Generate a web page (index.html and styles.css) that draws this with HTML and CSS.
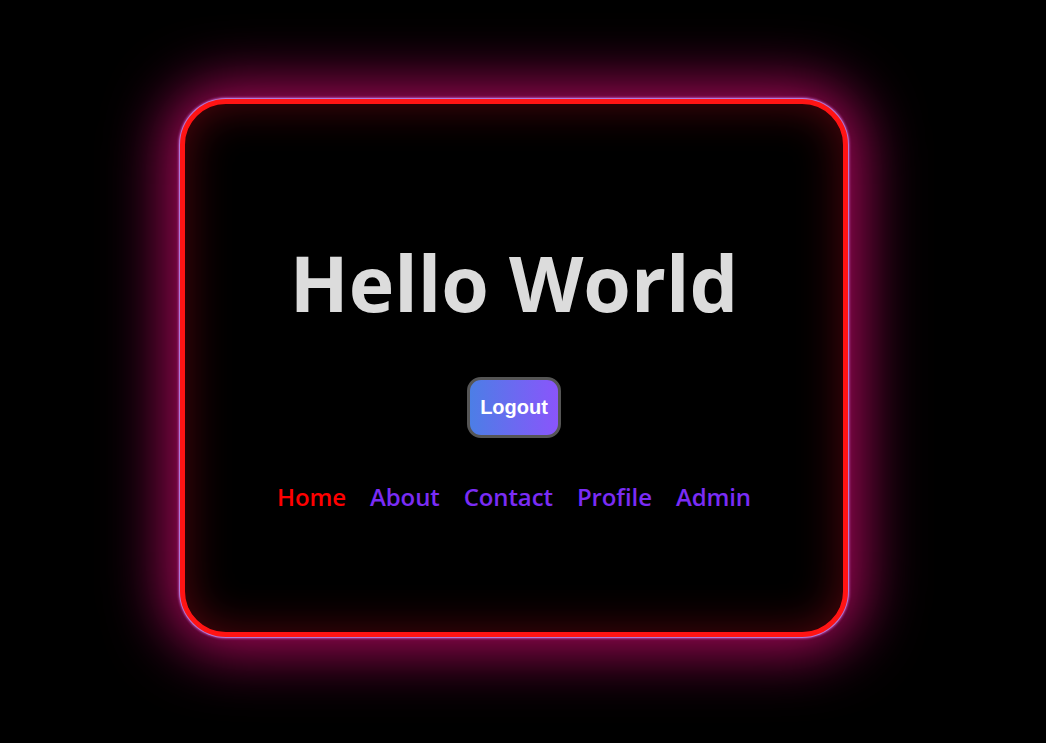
FILE: index.html
```html
<!DOCTYPE html>
<html lang="en">
<head>
<meta charset="utf-8">
<title>Hello World</title>
<link rel="stylesheet" href="styles.css">
</head>
<body>
<main class="card">
  <h1 class="title">Hello World</h1>
  <button class="logout" type="button">Logout</button>
  <nav class="nav">
    <a class="nav-link active" href="#">Home</a>
    <a class="nav-link" href="#">About</a>
    <a class="nav-link" href="#">Contact</a>
    <a class="nav-link" href="#">Profile</a>
    <a class="nav-link" href="#">Admin</a>
  </nav>
</main>
</body>
</html>
```
FILE: styles.css
```css
html, body {
  margin: 0;
  background: #000;
}
body {
  padding: 99px 0 0 180px;
  height: 743px;
  box-sizing: border-box;
  overflow: hidden;
  font-family: "Open Sans", "Noto Sans", sans-serif;
}
.card {
  width: 668px;
  height: 538px;
  box-sizing: border-box;
  border: 5px solid #ff1414;
  border-radius: 46px;
  background: #000;
  box-shadow:
    0 0 0 1px #b07ad8,
    0 0 2px 2px rgba(200, 90, 200, 0.6),
    0 0 60px 14px rgba(215, 10, 115, 0.8),
    inset 0 0 45px rgba(255, 20, 40, 0.32);
  display: flex;
  flex-direction: column;
  align-items: center;
  padding-top: 129px;
}
.title {
  margin: 0;
  color: #dcdcdc;
  font-size: 77px;
  font-weight: 700;
  line-height: 100px;
  letter-spacing: 0;
}
.logout {
  margin-top: 44px;
  padding: 0 10px;
  height: 61px;
  min-width: 94px;
  border: 3px solid #555;
  border-radius: 14px;
  background: linear-gradient(90deg, #4c7ee6, #8a55fb);
  color: #fff;
  font-family: "Liberation Sans", Arial, sans-serif;
  font-weight: 700;
  font-size: 20px;
  cursor: pointer;
}
.nav {
  margin-top: 44px;
  display: flex;
  gap: 24px;
}
.nav-link {
  color: #7a2cf5;
  text-decoration: none;
  font-size: 24px;
  font-weight: 600;
  line-height: 30px;
  letter-spacing: -0.1px;
}
.nav-link.active {
  color: #ff0000;
}
```
